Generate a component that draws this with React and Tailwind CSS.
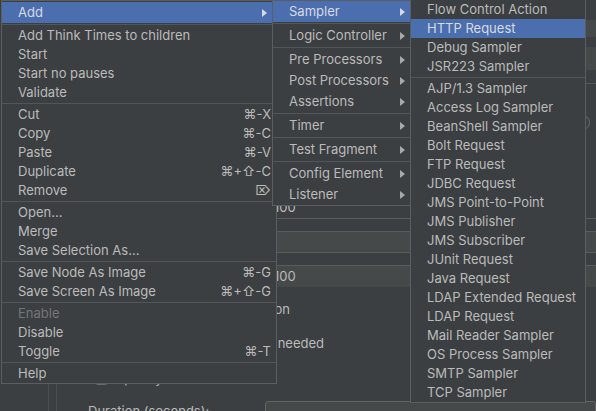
import React from "react";
import clsx from "clsx";

const addMenu = [
  { type: "item", label: "Add", sub: true, active: true, tall: true },
  { type: "sep" },
  { type: "item", label: "Add Think Times to children" },
  { type: "item", label: "Start" },
  { type: "item", label: "Start no pauses" },
  { type: "item", label: "Validate" },
  { type: "sep" },
  { type: "item", label: "Cut", shortcut: "⌘-X" },
  { type: "item", label: "Copy", shortcut: "⌘-C" },
  { type: "item", label: "Paste", shortcut: "⌘-V" },
  { type: "item", label: "Duplicate", shortcut: "⌘+⇧-C" },
  { type: "item", label: "Remove", shortcut: "⌦" },
  { type: "sep" },
  { type: "item", label: "Open..." },
  { type: "item", label: "Merge" },
  { type: "item", label: "Save Selection As..." },
  { type: "sep" },
  { type: "item", label: "Save Node As Image", shortcut: "⌘-G" },
  { type: "item", label: "Save Screen As Image", shortcut: "⌘+⇧-G" },
  { type: "sep" },
  { type: "item", label: "Enable", disabled: true },
  { type: "item", label: "Disable" },
  { type: "item", label: "Toggle", shortcut: "⌘-T" },
  { type: "sep" },
  { type: "item", label: "Help" },
];

const elementMenu = [
  { type: "item", label: "Sampler", sub: true, active: true },
  { type: "sep" },
  { type: "item", label: "Logic Controller", sub: true },
  { type: "sep" },
  { type: "item", label: "Pre Processors", sub: true },
  { type: "item", label: "Post Processors", sub: true },
  { type: "item", label: "Assertions", sub: true },
  { type: "sep" },
  { type: "item", label: "Timer", sub: true },
  { type: "sep" },
  { type: "item", label: "Test Fragment", sub: true },
  { type: "sep" },
  { type: "item", label: "Config Element", sub: true },
  { type: "item", label: "Listener", sub: true },
];

const samplerMenu = [
  "Flow Control Action",
  "HTTP Request",
  "Debug Sampler",
  "JSR223 Sampler",
  null,
  "AJP/1.3 Sampler",
  "Access Log Sampler",
  "BeanShell Sampler",
  "Bolt Request",
  "FTP Request",
  "JDBC Request",
  "JMS Point-to-Point",
  "JMS Publisher",
  "JMS Subscriber",
  "JUnit Request",
  "Java Request",
  "LDAP Extended Request",
  "LDAP Request",
  "Mail Reader Sampler",
  "OS Process Sampler",
  "SMTP Sampler",
  "TCP Sampler",
];

function Arrow({ active }) {
  return (
    <svg width="5" height="8" viewBox="0 0 5 8" className={active ? "fill-[#d6d9df]" : "fill-[#a7a9ab]"}>
      <path d="M0 0L5 4L0 8Z" />
    </svg>
  );
}

function Sep() {
  return (
    <div className="py-px">
      <div className="h-px bg-[#515658]" />
    </div>
  );
}

function Item({ label, shortcut, sub, active, disabled, height, arrowGap }) {
  return (
    <div
      className={clsx(
        "flex items-center pl-4 pr-[5px] whitespace-nowrap",
        height,
        active ? "bg-[#4b6eaf] text-[#d8dbe0]" : disabled ? "text-[#747678]" : "text-[#bbbbbb]"
      )}
    >
      <span className="flex-1">{label}</span>
      {shortcut && <span>{shortcut}</span>}
      {sub && (
        <span className={arrowGap}>
          <Arrow active={active} />
        </span>
      )}
    </div>
  );
}

function Field({ children, className }) {
  return <div className={clsx("shrink-0 flex items-center pl-1.5 text-[#bbbbbb]", className)}>{children}</div>;
}

function Check({ label }) {
  return (
    <div className="flex items-center gap-2 whitespace-nowrap">
      <span className="w-[13px] h-[13px] shrink-0 rounded-[3px] border border-[#6b6b6b] bg-[#43494a]" />
      <span className="text-[#bbbbbb]">{label}</span>
    </div>
  );
}

export default function App() {
  return (
    <div className="relative w-[596px] h-[411px] overflow-hidden bg-[#3c3f41] text-[13px] font-['Inter','DejaVu_Sans',sans-serif]">
      {/* panel behind the popup */}
      <div className="flex h-full">
        <div className="w-[49px] border-r border-[#4d5052]" />
        <div className="w-[8px] border-r border-[#4d5052]" />
        <div className="flex-1 flex flex-col">
          <div className="shrink-0 mt-[20px] ml-[223px] h-[17px] bg-[#45494a]" />
          <div className="shrink-0 mt-[10px] ml-[223px] h-[23px] bg-[#45494a]" />
          <div className="shrink-0 mt-[13px] ml-[20px] h-px bg-[#55585a]" />
          <div className="shrink-0 mt-[31px] ml-[518px] w-[15px] h-[15px] rounded-full border border-[#6b6b6b]" />
          <Field className="mt-[67px] ml-[211px] h-[22px] border-b border-[#5a5d5f]">100</Field>
          <div className="shrink-0 mt-[12px] ml-[211px] h-[22px] bg-[#45494a] border-y border-[#5a5d5f]" />
          <Field className="mt-[12px] ml-[211px] h-[22px] bg-[#45494a] border-t border-[#5a5d5f]">100</Field>
          <div className="shrink-0 mt-[15px] w-[233px] h-[16px] flex justify-end">
            <Check label="Same user on each iteration" />
          </div>
          <div className="shrink-0 mt-[18px] w-[267px] h-[16px] flex justify-end">
            <Check label="Delay Thread creation until needed" />
          </div>
          <div className="shrink-0 mt-[17px] ml-[38px] h-[14px]">
            <Check label="Specify Thread lifetime" />
          </div>
          <div className="shrink-0 mt-[18px] flex items-start">
            <span className="ml-[31px] mt-[1px] w-[177px] leading-[18px] text-[#bbbbbb]">Duration (seconds):</span>
            <div className="flex-1 h-[22px] rounded-[3px] border border-[#646464] bg-[#45494a]" />
          </div>
        </div>
      </div>

      {/* popup menu */}
      <div className="absolute left-[1px] top-0 w-[276px] border border-[#5b5e60] bg-[#3c3f41] pt-px">
        {addMenu.map((m, i) =>
          m.type === "sep" ? (
            <Sep key={i} />
          ) : (
            <Item key={i} {...m} height={m.tall ? "h-[21px]" : "h-[19px]"} arrowGap="mr-1" />
          )
        )}
      </div>

      <div className="absolute left-[272px] top-0 w-[139px] border border-[#5b5e60] bg-[#3c3f41]">
        {elementMenu.map((m, i) =>
          m.type === "sep" ? <Sep key={i} /> : <Item key={i} {...m} height="h-[21px]" arrowGap="" />
        )}
      </div>

      <div className="absolute left-[410px] top-[-1px] w-[176px] border border-[#5b5e60] bg-[#3c3f41]">
        {samplerMenu.map((label, i) =>
          label === null ? (
            <Sep key={i} />
          ) : (
            <Item key={i} label={label} active={label === "HTTP Request"} height="h-[19px]" />
          )
        )}
      </div>
    </div>
  );
}
